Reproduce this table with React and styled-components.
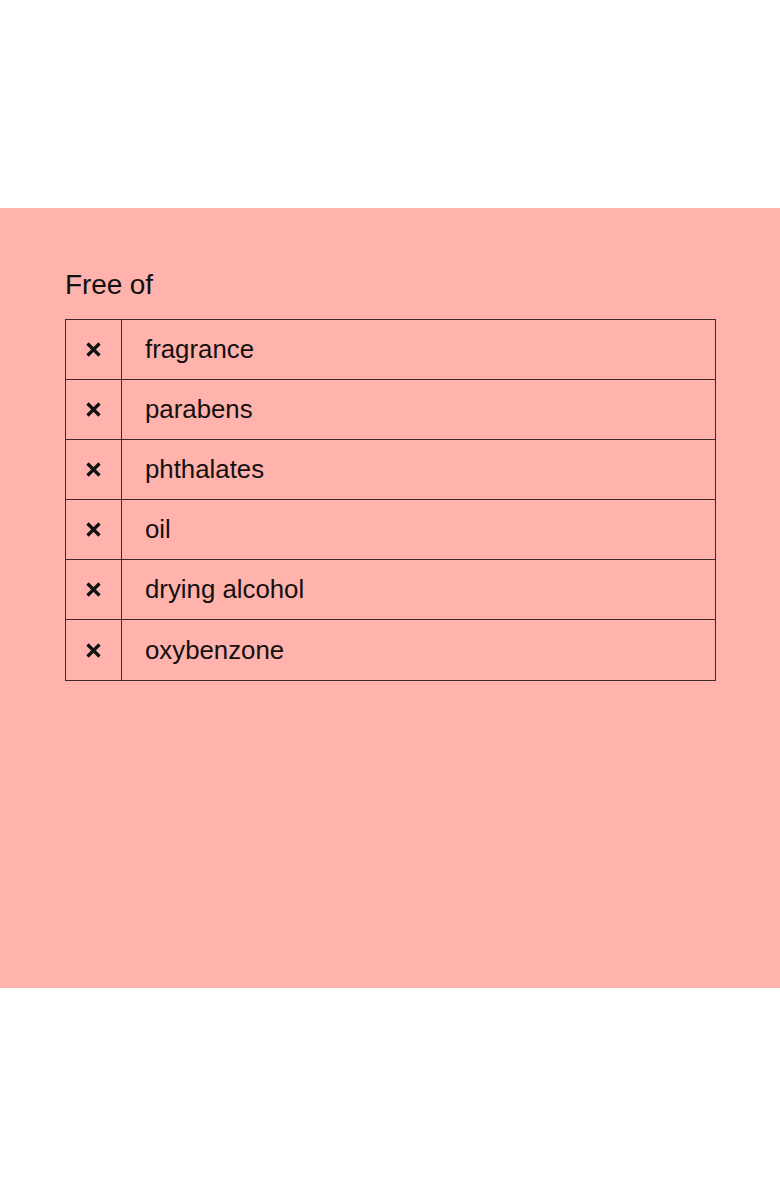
import React from 'react';
import styled, { createGlobalStyle } from 'styled-components';

const GlobalStyle = createGlobalStyle`
  body {
    margin: 0;
    background: #fff;
    font-family: "Liberation Sans", Arial, sans-serif;
  }
`;

const Page = styled.div`
  width: 780px;
  padding-top: 208px;
  padding-bottom: 208px;
`;

const Panel = styled.section`
  height: 780px;
  box-sizing: border-box;
  background: #ffb3ac;
  padding: 60px 64px 0 65px;
`;

const Heading = styled.h2`
  margin: 0 0 17px;
  font-size: 28px;
  line-height: 34px;
  font-weight: 400;
  letter-spacing: -0.1px;
  color: #111;
`;

const Table = styled.div`
  width: 651px;
  box-sizing: border-box;
  border: 1px solid #3a2a28;
  border-bottom: none;
`;

const Row = styled.div`
  display: grid;
  grid-template-columns: 56px 1fr;
  height: 60px;
  box-sizing: border-box;
  border-bottom: 1px solid #3a2a28;

  &:last-child {
    height: 61px;
  }
`;

const IconCell = styled.div`
  display: flex;
  align-items: center;
  justify-content: center;
  border-right: 1px solid #3a2a28;
`;

const Label = styled.div`
  display: flex;
  align-items: center;
  padding-left: 23px;
  font-size: 25.8px;
  color: #141010;
`;

const Cross = () => (
  <svg width="17" height="15" viewBox="0 0 17 15">
    <path d="M2.5 1.5 L14.5 13.5 M14.5 1.5 L2.5 13.5" stroke="#111" strokeWidth="3.2" strokeLinecap="butt" />
  </svg>
);

const items = ['fragrance', 'parabens', 'phthalates', 'oil', 'drying alcohol', 'oxybenzone'];

export default function App() {
  return (
    <Page>
      <GlobalStyle />
      <Panel>
        <Heading>Free of</Heading>
        <Table>
          {items.map((item) => (
            <Row key={item}>
              <IconCell>
                <Cross />
              </IconCell>
              <Label>{item}</Label>
            </Row>
          ))}
        </Table>
      </Panel>
    </Page>
  );
}
